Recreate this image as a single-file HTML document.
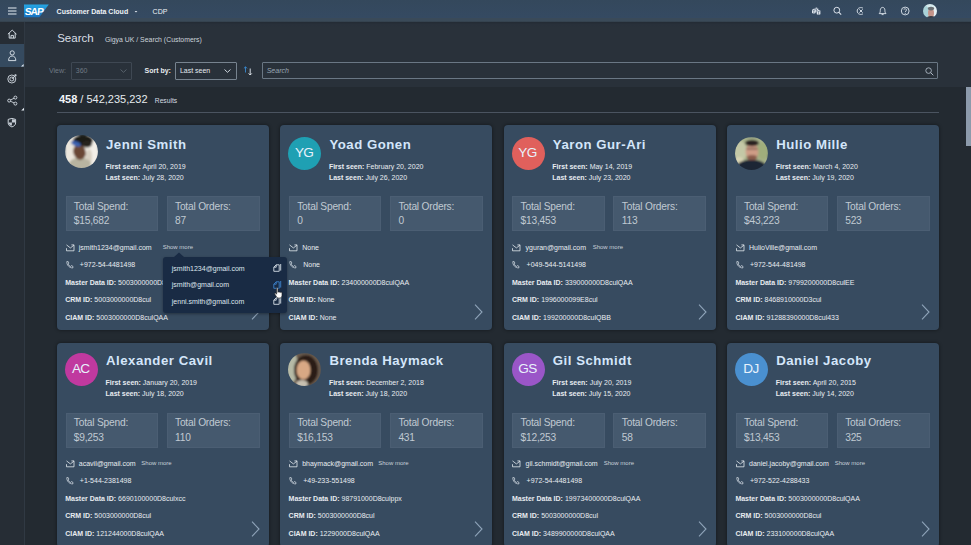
<!DOCTYPE html>
<html><head><meta charset="utf-8"><style>
*{box-sizing:border-box;margin:0;padding:0}
html,body{width:971px;height:545px;overflow:hidden;background:#232a31;font-family:"Liberation Sans",sans-serif;color:#e8ecf0}
.t{position:absolute;white-space:nowrap}
.shell{position:absolute;left:0;top:0;width:971px;height:22px;background:linear-gradient(180deg,#34485c 0,#354a62 17.5px,#3a4a59 18.5px,#3a4a58 21.3px,#2a333c 22px)}
.nav{position:absolute;left:0;top:22px;width:25px;height:523px;background:#262d35;border-right:1px solid #303943}
.navsel{position:absolute;left:0;top:44px;width:24px;height:22.7px;background:#354a5f}
.hdr{position:absolute;left:24px;top:22px;width:947px;height:65px;background:linear-gradient(180deg,#232b34 0,#28303a 2.5px,#29313a 5px)}
.card{position:absolute;width:212px;height:204.5px;background:#374b60;border-radius:4px;overflow:hidden;box-shadow:0 0 3px 1px rgba(0,0,0,0.28)}
.card .t{color:#e8ecf0}
.nm{font-weight:bold;color:#d4e6fa!important;letter-spacing:0.52px}
.sm b{font-weight:bold}
.box{position:absolute;height:35px;background:#45596e;box-shadow:inset 0 0 0 1px rgba(255,255,255,0.035)}
.st{color:#c0c9d2!important;letter-spacing:-0.2px}
.more{color:#c8d0d8!important}
.av{position:absolute;left:8px;top:11.3px;width:33px;height:33px;border-radius:50%;overflow:hidden}
.av span{position:absolute;left:-1.5px;right:0;top:-0.5px;bottom:0;text-align:center;line-height:33px;font-size:13.6px;color:#e8f2fc;letter-spacing:-0.6px}
.icw{position:absolute;line-height:0}
.chev{position:absolute;left:194px;top:179px}
.sb{position:absolute;left:966px;top:87px;width:5px;height:59px;background:#8c9aab}

.pop{position:absolute;left:163px;top:256.6px;width:124px;height:56.5px;background:#192b44;border-radius:3px;box-shadow:0 1px 3px rgba(0,0,0,0.35)}
.popt{color:#dfe6ee}
.uav{position:absolute;left:922.5px;top:3.5px;width:14px;height:14px;border-radius:50%;background:radial-gradient(ellipse 3.2px 4.6px at 7.6px 7.8px,#c49a88 0,#b08070 60%,transparent 100%),radial-gradient(circle at 7px 3px,#404850 0,#404850 25%,transparent 35%),linear-gradient(90deg,#bfe0e6,#e8f2f4 50%,#cfe4ea)}
.ph.jenni{background:radial-gradient(ellipse 7px 8px at 19px 19px,#6e4632 0,#7a4e36 55%,transparent 100%),radial-gradient(ellipse 6px 3.5px at 13px 9px,#2f5fa8 0,#2f5fa8 60%,transparent 100%),radial-gradient(ellipse 13px 9px at 18px 5px,#1e1a18 0,#2a2420 60%,transparent 100%),radial-gradient(ellipse 10px 7px at 14px 31px,#c8b8a0 0,#b0a088 70%,transparent 100%),linear-gradient(90deg,#e6ddd0,#efe8de 40%,#e9e2d6)}
.ph.hulio{background:radial-gradient(ellipse 6px 7.5px at 16.5px 15px,#c08a72 0,#b07a62 60%,transparent 100%),radial-gradient(ellipse 7px 4px at 16.5px 7px,#2a2220 0,#2a2220 60%,transparent 100%),radial-gradient(ellipse 16px 8px at 16.5px 33px,#1e2434 0,#1e2434 70%,transparent 100%),linear-gradient(90deg,#c4c8a4,#9fae84 30%,#b8c0a0 70%,#a6b28c)}
.ph.brenda{background:radial-gradient(ellipse 6.5px 8.5px at 16px 17px,#d8a888 0,#c89070 60%,transparent 100%),radial-gradient(ellipse 12px 15px at 18px 17px,#2a1c16 0,#2e1e18 70%,transparent 100%),linear-gradient(90deg,#b8bca8,#8e9480 40%,#4a3c34)}
.sh{color:#eef2f6}
.hd{color:#e6eaee}
.hd2{color:#ccd3da}
.dis{color:#6f7984}
.inp{position:absolute;border:1px solid #3f4853;border-radius:1px}
.ph{color:#9aa6b2;font-style:italic}
.res{color:#e6eaee}
.res b{color:#f2f5f8}
.res2{color:#d6dce2}
</style></head>
<body>
<div class="shell"></div>
<div class="hdr"></div>
<div class="nav"></div><div class="navsel"></div>
<svg style="position:absolute;left:8px;top:7px" width="9" height="8" viewBox="0 0 9 8"><path d="M0 1h8.5M0 4h8.5M0 7h8.5" stroke="#e6edf4" stroke-width="1.1"/></svg>
<svg style="position:absolute;left:24px;top:4px" width="26" height="14" viewBox="0 0 26 14"><defs><linearGradient id="sapg" x1="0" y1="0" x2="0" y2="1"><stop offset="0" stop-color="#26a6e4"/><stop offset="1" stop-color="#1872c0"/></linearGradient></defs><path d="M0 0.5H24.8L15.4 13.3H0Z" fill="url(#sapg)"/><text x="0.6" y="10.8" font-family="Liberation Sans" font-weight="bold" font-size="10.2" fill="#fff" letter-spacing="-0.9" transform="skewX(-6) translate(1,0)">SAP</text></svg>
<div class="t sh" style="left:56.60px;top:8.07px;font-size:7px;line-height:7px;font-weight:bold">Customer Data Cloud</div>
<svg style="position:absolute;left:134px;top:10px" width="4" height="3" viewBox="0 0 4 3"><path d="M0.6 1h2.8L2 2.4z" fill="#dfe6ee"/></svg>
<div class="t sh" style="left:152.60px;top:8.07px;font-size:7px;line-height:7px;">CDP</div>
<div class="t hd" style="left:57.20px;top:32.87px;font-size:11.5px;line-height:11.5px;color:#d9dfe5">Search</div>
<div class="t hd2" style="left:104.90px;top:36.96px;font-size:6.9px;line-height:6.9px;">Gigya UK / Search (Customers)</div>
<div class="t dis" style="left:49.00px;top:67.17px;font-size:7px;line-height:7px;">View:</div>
<div class="inp dis-b" style="left:70.5px;top:61.5px;width:61px;height:18px"></div>
<div class="t dis" style="left:75.80px;top:67.17px;font-size:7px;line-height:7px;">360</div>
<svg style="position:absolute;left:119.5px;top:69px" width="7" height="4" viewBox="0 0 7 4"><path d="M0.5 0.5L3.5 3.3L6.5 0.5" fill="none" stroke="#5c6670" stroke-width="0.9"/></svg>
<div class="t hd" style="left:144.50px;top:67.17px;font-size:7px;line-height:7px;font-weight:bold">Sort by:</div>
<div class="inp" style="left:175.3px;top:61.6px;width:61.5px;height:18.1px;border-color:#77838f"></div>
<div class="t hd" style="left:179.90px;top:67.17px;font-size:7px;line-height:7px;">Last seen</div>
<svg style="position:absolute;left:223.5px;top:69px" width="7" height="4" viewBox="0 0 7 4"><path d="M0.5 0.5L3.5 3.3L6.5 0.5" fill="none" stroke="#dfe6ee" stroke-width="0.9"/></svg>
<svg style="position:absolute;left:242.5px;top:66px" width="10" height="10" viewBox="0 0 10 10"><path d="M2.5 6.5V0.8M0.9 2.4L2.5 0.8L4.1 2.4" fill="none" stroke="#3a8ad0" stroke-width="0.9"/><path d="M7.2 2.5V9M5.6 7.4L7.2 9L8.8 7.4" fill="none" stroke="#e6edf4" stroke-width="0.9"/></svg>
<div class="inp" style="left:262.3px;top:61.7px;width:676px;height:17.6px;border-color:#6a7784"></div>
<div class="t ph" style="left:266.70px;top:67.17px;font-size:7px;line-height:7px;">Search</div>
<svg style="position:absolute;left:925px;top:67px" width="9" height="9" viewBox="0 0 9 9"><circle cx="3.6" cy="3.6" r="2.8" fill="none" stroke="#aeb9c4" stroke-width="0.9"/><path d="M5.6 5.6L8.3 8.3" stroke="#aeb9c4" stroke-width="1"/></svg>
<div class="t res" style="left:58.90px;top:93.69px;font-size:11px;line-height:11px;"><b>458</b> / 542,235,232</div>
<div class="t res2" style="left:154.80px;top:98.13px;font-size:6.7px;line-height:6.7px;">Results</div>
<div style="position:absolute;left:57px;top:111.6px;width:882px;height:1px;background:#4b5460"></div>
<svg style="position:absolute;left:0;top:22px" width="25" height="110" viewBox="0 22 25 110"><path d="M7.9 34.2L12.2 30.1L16.5 34.2M9.2 33V38.1H15.2V33M11 38.1V35.4H13.4V38.1" fill="none" stroke="#dfe6ee" stroke-width="0.9"/><circle cx="12.2" cy="52.9" r="2.1" fill="none" stroke="#dfe6ee" stroke-width="0.9"/><path d="M8.6 60.6C8.6 57.6 10 56 12.2 56C14.4 56 15.8 57.6 15.8 60.6Z" fill="none" stroke="#dfe6ee" stroke-width="0.9"/><path d="M21 66.5L23.6 63.9V66.5Z" fill="#e6edf4"/><circle cx="11.8" cy="79" r="4" fill="none" stroke="#dfe6ee" stroke-width="0.85"/><circle cx="11.8" cy="79" r="2" fill="none" stroke="#dfe6ee" stroke-width="0.85"/><path d="M11.8 79L16 74.8M14.6 74.8H16V76.2" fill="none" stroke="#dfe6ee" stroke-width="0.85"/><circle cx="9.2" cy="100.6" r="1.5" fill="none" stroke="#dfe6ee" stroke-width="0.85"/><circle cx="15.4" cy="97.6" r="1.5" fill="none" stroke="#dfe6ee" stroke-width="0.85"/><circle cx="15.4" cy="103.6" r="1.5" fill="none" stroke="#dfe6ee" stroke-width="0.85"/><path d="M10.5 99.9L14.1 98.3M10.5 101.3L14.1 102.9" stroke="#dfe6ee" stroke-width="0.8"/><path d="M21.2 110.6L24 107.8V110.6Z" fill="#e6edf4"/><path d="M8.2 119.4L11.9 118.4L15.6 119.4V123C15.6 125 14 126.3 11.9 126.9C9.8 126.3 8.2 125 8.2 123Z" fill="none" stroke="#dfe6ee" stroke-width="0.9"/><path d="M11.9 119.3V122.6H8.8V123.3C9 124.2 9.6 125 10.3 125.4H11.9V122.6H15V119.8Z" fill="#dfe6ee" opacity="0.85"/></svg>
<svg style="position:absolute;left:805px;top:0" width="140" height="21" viewBox="805 0 140 21"><path d="M812 9.6L813.8 8.8L815.6 9.6V13L813.8 13.8L812 13Z" fill="#dfe6ee"/><path d="M814.6 8.2L816.4 7.4L818.2 8.2V11.4L816.4 12.2L814.6 11.4Z" fill="#dfe6ee"/><path d="M816.8 10.6L818.6 9.8L820.4 10.6V14.2L818.6 15L816.8 14.2Z" fill="#dfe6ee"/><path d="M812 9.6L813.8 10.4L815.6 9.6M813.8 10.4V13.8M814.6 8.2L816.4 9L818.2 8.2M816.4 9V12.2M816.8 10.6L818.6 11.4L820.4 10.6M818.6 11.4V15" fill="none" stroke="#3a4f66" stroke-width="0.55"/><circle cx="836.8" cy="10.2" r="2.9" fill="none" stroke="#dfe6ee" stroke-width="0.95"/><path d="M838.9 12.3L841.2 14.6" stroke="#dfe6ee" stroke-width="1.1"/><path d="M863 8.2C861.2 6.9 857.2 7.6 857.2 11C857.2 14.4 861.2 15.1 863 13.8M859.4 9.4L862.6 12.6M859.4 12.6L862.6 9.4" fill="none" stroke="#dfe6ee" stroke-width="0.9"/><path d="M879.2 13.6H886C885 12.6 884.9 11.6 884.9 10.4C884.9 8.6 884 7.4 882.6 7.4C881.2 7.4 880.3 8.6 880.3 10.4C880.3 11.6 880.2 12.6 879.2 13.6ZM881.6 14.6H883.6" fill="none" stroke="#dfe6ee" stroke-width="0.9"/><circle cx="905.2" cy="11" r="3.9" fill="none" stroke="#dfe6ee" stroke-width="0.9"/><path d="M903.8 9.8C903.8 8.6 906.6 8.4 906.6 9.9C906.6 10.9 905.2 11 905.2 12.2" fill="none" stroke="#dfe6ee" stroke-width="0.85"/><circle cx="905.2" cy="13.6" r="0.5" fill="#dfe6ee"/></svg>
<div style="position:absolute;left:922.5px;top:3.6px;width:14px;height:14px;border-radius:50%;overflow:hidden"><svg width="14" height="14" viewBox="0 0 14 14"><defs><filter id="bu" x="-20%" y="-20%" width="140%" height="140%"><feGaussianBlur stdDeviation="0.6"/></filter></defs><g filter="url(#bu)"><rect width="14" height="14" fill="#d6eaee"/><ellipse cx="3" cy="8" rx="3" ry="6" fill="#a9d2d8"/><ellipse cx="12.5" cy="8" rx="2.5" ry="6" fill="#e6f0f4"/><ellipse cx="8" cy="9" rx="3" ry="4.6" fill="#c4948a"/><ellipse cx="8" cy="4.6" rx="3.2" ry="1.8" fill="#6a6e72"/><ellipse cx="8" cy="14" rx="4" ry="2" fill="#3a3c44"/></g></svg></div>
<div class="card" style="left:57px;top:125.3px"><div style="position:absolute;left:0;top:0px;width:212px;height:210px">
<div class="av" style="top:10px"><svg width="33" height="33" viewBox="0 0 33 33"><defs><filter id="bljenni" x="-20%" y="-20%" width="140%" height="140%"><feGaussianBlur stdDeviation="1.2"/></filter></defs><g filter="url(#bljenni)"><rect width="33" height="33" fill="#ebe6dc"/><ellipse cx="27" cy="18" rx="7" ry="13" fill="#f3efe8"/><ellipse cx="24" cy="22" rx="3" ry="8" fill="#d8d0c2"/><ellipse cx="15" cy="29" rx="11" ry="6.5" fill="#b8b4a0"/><ellipse cx="14.5" cy="17" rx="6.2" ry="7.8" fill="#6a4634" transform="rotate(-15 14.5 17)"/><ellipse cx="18" cy="5.5" rx="10" ry="5.8" fill="#1e1a18"/><ellipse cx="22" cy="9" rx="5" ry="3.5" fill="#26201c"/><ellipse cx="11" cy="8.8" rx="5" ry="2.4" fill="#3a62b0" transform="rotate(20 11 8.8)"/></g></svg></div>
<div class="t nm" style="left:49.00px;top:12.73px;font-size:13.2px;line-height:13.2px;">Jenni Smith</div>
<div class="t sm" style="left:48.50px;top:37.67px;font-size:7px;line-height:7px;"><b>First seen:</b> April 20, 2019</div>
<div class="t sm" style="left:48.50px;top:48.77px;font-size:7px;line-height:7px;"><b>Last seen:</b> July 28, 2020</div>
<div class="box" style="left:8.5px;top:71px;width:92.5px"></div>
<div class="box" style="left:109.5px;top:71px;width:93px"></div>
<div class="t st" style="left:16.80px;top:76.67px;font-size:10.2px;line-height:10.2px;">Total Spend:</div>
<div class="t st" style="left:16.80px;top:91.07px;font-size:10.2px;line-height:10.2px;">$15,682</div>
<div class="t st" style="left:118.00px;top:76.67px;font-size:10.2px;line-height:10.2px;">Total Orders:</div>
<div class="t st" style="left:118.00px;top:91.07px;font-size:10.2px;line-height:10.2px;">87</div>
<div class="icw" style="left:8.6px;top:118.8px"><svg class="ic" width="9" height="8" viewBox="0 0 9 8"><path d="M0.5 0.9L4.4 3.9L8 1.2M8 0.8V6.8H0.5V4.2M5.4 0.9H8" fill="none" stroke="#e2e8ee" stroke-width="0.8"/></svg></div>
<div class="t sm" style="left:21.80px;top:118.67px;font-size:7px;line-height:7px;">jsmith1234@gmail.com</div>
<div class="t more" style="left:105.70px;top:118.32px;font-size:6px;line-height:6px;">Show more</div>
<div class="icw" style="left:8.6px;top:135.6px"><svg class="ic" width="8" height="8" viewBox="0 0 8 8"><path d="M0.8 0.6H2.2L2.9 2.2L2 3C2.5 4.2 3.3 5 4.5 5.5L5.3 4.6L6.9 5.3V6.9C3.4 7.1 0.6 4.1 0.8 0.6Z" fill="none" stroke="#dfe6ee" stroke-width="0.7"/></svg></div>
<div class="t sm" style="left:22.80px;top:135.47px;font-size:7px;line-height:7px;">+972-54-4481498</div>
<div class="t sm" style="left:8.20px;top:153.57px;font-size:7px;line-height:7px;"><b>Master Data ID:</b> 5003000000D8culQAA</div>
<div class="t sm" style="left:8.20px;top:170.97px;font-size:7px;line-height:7px;"><b>CRM ID:</b> 5003000000D8cul</div>
<div class="t sm" style="left:8.20px;top:188.47px;font-size:7px;line-height:7px;"><b>CIAM ID:</b> 5003000000D8culQAA</div>
<svg class="chev" width="9" height="16" viewBox="0 0 9 16"><path d="M1 0.7L8 8L1 15.3" fill="none" stroke="#8ea3b8" stroke-width="1.1"/></svg>
</div></div>
<div class="card" style="left:280.4px;top:125.3px"><div style="position:absolute;left:0;top:0px;width:212px;height:210px">
<div class="av" style="background:#1fa0b3"><span>YG</span></div>
<div class="t nm" style="left:49.00px;top:12.73px;font-size:13.2px;line-height:13.2px;">Yoad Gonen</div>
<div class="t sm" style="left:48.50px;top:37.67px;font-size:7px;line-height:7px;"><b>First seen:</b> February 20, 2020</div>
<div class="t sm" style="left:48.50px;top:48.77px;font-size:7px;line-height:7px;"><b>Last seen:</b> July 26, 2020</div>
<div class="box" style="left:8.5px;top:71px;width:92.5px"></div>
<div class="box" style="left:109.5px;top:71px;width:93px"></div>
<div class="t st" style="left:16.80px;top:76.67px;font-size:10.2px;line-height:10.2px;">Total Spend:</div>
<div class="t st" style="left:16.80px;top:91.07px;font-size:10.2px;line-height:10.2px;">0</div>
<div class="t st" style="left:118.00px;top:76.67px;font-size:10.2px;line-height:10.2px;">Total Orders:</div>
<div class="t st" style="left:118.00px;top:91.07px;font-size:10.2px;line-height:10.2px;">0</div>
<div class="icw" style="left:8.6px;top:118.8px"><svg class="ic" width="9" height="8" viewBox="0 0 9 8"><path d="M0.5 0.9L4.4 3.9L8 1.2M8 0.8V6.8H0.5V4.2M5.4 0.9H8" fill="none" stroke="#e2e8ee" stroke-width="0.8"/></svg></div>
<div class="t sm" style="left:21.80px;top:118.67px;font-size:7px;line-height:7px;">None</div>
<div class="icw" style="left:8.6px;top:135.6px"><svg class="ic" width="8" height="8" viewBox="0 0 8 8"><path d="M0.8 0.6H2.2L2.9 2.2L2 3C2.5 4.2 3.3 5 4.5 5.5L5.3 4.6L6.9 5.3V6.9C3.4 7.1 0.6 4.1 0.8 0.6Z" fill="none" stroke="#dfe6ee" stroke-width="0.7"/></svg></div>
<div class="t sm" style="left:22.80px;top:135.47px;font-size:7px;line-height:7px;">None</div>
<div class="t sm" style="left:8.20px;top:153.57px;font-size:7px;line-height:7px;"><b>Master Data ID:</b> 234000000D8culQAA</div>
<div class="t sm" style="left:8.20px;top:170.97px;font-size:7px;line-height:7px;"><b>CRM ID:</b> None</div>
<div class="t sm" style="left:8.20px;top:188.47px;font-size:7px;line-height:7px;"><b>CIAM ID:</b> None</div>
<svg class="chev" width="9" height="16" viewBox="0 0 9 16"><path d="M1 0.7L8 8L1 15.3" fill="none" stroke="#8ea3b8" stroke-width="1.1"/></svg>
</div></div>
<div class="card" style="left:503.8px;top:125.3px"><div style="position:absolute;left:0;top:0px;width:212px;height:210px">
<div class="av" style="background:#e0605c"><span>YG</span></div>
<div class="t nm" style="left:49.00px;top:12.73px;font-size:13.2px;line-height:13.2px;">Yaron Gur-Ari</div>
<div class="t sm" style="left:48.50px;top:37.67px;font-size:7px;line-height:7px;"><b>First seen:</b> May 14, 2019</div>
<div class="t sm" style="left:48.50px;top:48.77px;font-size:7px;line-height:7px;"><b>Last seen:</b> July 23, 2020</div>
<div class="box" style="left:8.5px;top:71px;width:92.5px"></div>
<div class="box" style="left:109.5px;top:71px;width:93px"></div>
<div class="t st" style="left:16.80px;top:76.67px;font-size:10.2px;line-height:10.2px;">Total Spend:</div>
<div class="t st" style="left:16.80px;top:91.07px;font-size:10.2px;line-height:10.2px;">$13,453</div>
<div class="t st" style="left:118.00px;top:76.67px;font-size:10.2px;line-height:10.2px;">Total Orders:</div>
<div class="t st" style="left:118.00px;top:91.07px;font-size:10.2px;line-height:10.2px;">113</div>
<div class="icw" style="left:8.6px;top:118.8px"><svg class="ic" width="9" height="8" viewBox="0 0 9 8"><path d="M0.5 0.9L4.4 3.9L8 1.2M8 0.8V6.8H0.5V4.2M5.4 0.9H8" fill="none" stroke="#e2e8ee" stroke-width="0.8"/></svg></div>
<div class="t sm" style="left:21.80px;top:118.67px;font-size:7px;line-height:7px;">yguran@gmail.com</div>
<div class="t more" style="left:88.90px;top:118.32px;font-size:6px;line-height:6px;">Show more</div>
<div class="icw" style="left:8.6px;top:135.6px"><svg class="ic" width="8" height="8" viewBox="0 0 8 8"><path d="M0.8 0.6H2.2L2.9 2.2L2 3C2.5 4.2 3.3 5 4.5 5.5L5.3 4.6L6.9 5.3V6.9C3.4 7.1 0.6 4.1 0.8 0.6Z" fill="none" stroke="#dfe6ee" stroke-width="0.7"/></svg></div>
<div class="t sm" style="left:22.80px;top:135.47px;font-size:7px;line-height:7px;">+049-544-5141498</div>
<div class="t sm" style="left:8.20px;top:153.57px;font-size:7px;line-height:7px;"><b>Master Data ID:</b> 339000000D8culQAA</div>
<div class="t sm" style="left:8.20px;top:170.97px;font-size:7px;line-height:7px;"><b>CRM ID:</b> 1996000099E8cul</div>
<div class="t sm" style="left:8.20px;top:188.47px;font-size:7px;line-height:7px;"><b>CIAM ID:</b> 199200000D8culQBB</div>
<svg class="chev" width="9" height="16" viewBox="0 0 9 16"><path d="M1 0.7L8 8L1 15.3" fill="none" stroke="#8ea3b8" stroke-width="1.1"/></svg>
</div></div>
<div class="card" style="left:727.2px;top:125.3px"><div style="position:absolute;left:0;top:0px;width:212px;height:210px">
<div class="av"><svg width="33" height="33" viewBox="0 0 33 33"><defs><filter id="blhulio" x="-20%" y="-20%" width="140%" height="140%"><feGaussianBlur stdDeviation="1.2"/></filter></defs><g filter="url(#blhulio)"><rect width="33" height="33" fill="#a9b38c"/><ellipse cx="5" cy="14" rx="7" ry="10" fill="#c4c8a6"/><ellipse cx="28" cy="14" rx="6" ry="9" fill="#a0ae7c"/><ellipse cx="4" cy="24" rx="5" ry="4" fill="#d8d4b4"/><ellipse cx="16.5" cy="32" rx="16" ry="9.5" fill="#1e2536"/><ellipse cx="17" cy="14.5" rx="6.4" ry="8.6" fill="#cf9c86"/><ellipse cx="17" cy="6" rx="7" ry="3.2" fill="#2a2420"/><rect x="11.5" y="11.2" width="11" height="1.1" fill="#5a4038"/><ellipse cx="17" cy="20.5" rx="5.2" ry="2.6" fill="#8a5c4c"/></g></svg></div>
<div class="t nm" style="left:49.00px;top:12.73px;font-size:13.2px;line-height:13.2px;">Hulio Mille</div>
<div class="t sm" style="left:48.50px;top:37.67px;font-size:7px;line-height:7px;"><b>First seen:</b> March 4, 2020</div>
<div class="t sm" style="left:48.50px;top:48.77px;font-size:7px;line-height:7px;"><b>Last seen:</b> July 19, 2020</div>
<div class="box" style="left:8.5px;top:71px;width:92.5px"></div>
<div class="box" style="left:109.5px;top:71px;width:93px"></div>
<div class="t st" style="left:16.80px;top:76.67px;font-size:10.2px;line-height:10.2px;">Total Spend:</div>
<div class="t st" style="left:16.80px;top:91.07px;font-size:10.2px;line-height:10.2px;">$43,223</div>
<div class="t st" style="left:118.00px;top:76.67px;font-size:10.2px;line-height:10.2px;">Total Orders:</div>
<div class="t st" style="left:118.00px;top:91.07px;font-size:10.2px;line-height:10.2px;">523</div>
<div class="icw" style="left:8.6px;top:118.8px"><svg class="ic" width="9" height="8" viewBox="0 0 9 8"><path d="M0.5 0.9L4.4 3.9L8 1.2M8 0.8V6.8H0.5V4.2M5.4 0.9H8" fill="none" stroke="#e2e8ee" stroke-width="0.8"/></svg></div>
<div class="t sm" style="left:21.80px;top:118.67px;font-size:7px;line-height:7px;">HulioVille@gmail.com</div>
<div class="icw" style="left:8.6px;top:135.6px"><svg class="ic" width="8" height="8" viewBox="0 0 8 8"><path d="M0.8 0.6H2.2L2.9 2.2L2 3C2.5 4.2 3.3 5 4.5 5.5L5.3 4.6L6.9 5.3V6.9C3.4 7.1 0.6 4.1 0.8 0.6Z" fill="none" stroke="#dfe6ee" stroke-width="0.7"/></svg></div>
<div class="t sm" style="left:22.80px;top:135.47px;font-size:7px;line-height:7px;">+972-544-481498</div>
<div class="t sm" style="left:8.20px;top:153.57px;font-size:7px;line-height:7px;"><b>Master Data ID:</b> 9799200000D8culEE</div>
<div class="t sm" style="left:8.20px;top:170.97px;font-size:7px;line-height:7px;"><b>CRM ID:</b> 8468910000D3cul</div>
<div class="t sm" style="left:8.20px;top:188.47px;font-size:7px;line-height:7px;"><b>CIAM ID:</b> 91288390000D8cul433</div>
<svg class="chev" width="9" height="16" viewBox="0 0 9 16"><path d="M1 0.7L8 8L1 15.3" fill="none" stroke="#8ea3b8" stroke-width="1.1"/></svg>
</div></div>
<div class="card" style="left:57px;top:342.5px"><div style="position:absolute;left:0;top:-1px;width:212px;height:210px">
<div class="av" style="background:#c0399f"><span>AC</span></div>
<div class="t nm" style="left:49.00px;top:12.73px;font-size:13.2px;line-height:13.2px;">Alexander Cavil</div>
<div class="t sm" style="left:48.50px;top:37.67px;font-size:7px;line-height:7px;"><b>First seen:</b> January 20, 2019</div>
<div class="t sm" style="left:48.50px;top:48.77px;font-size:7px;line-height:7px;"><b>Last seen:</b> July 18, 2020</div>
<div class="box" style="left:8.5px;top:71px;width:92.5px"></div>
<div class="box" style="left:109.5px;top:71px;width:93px"></div>
<div class="t st" style="left:16.80px;top:76.67px;font-size:10.2px;line-height:10.2px;">Total Spend:</div>
<div class="t st" style="left:16.80px;top:91.07px;font-size:10.2px;line-height:10.2px;">$9,253</div>
<div class="t st" style="left:118.00px;top:76.67px;font-size:10.2px;line-height:10.2px;">Total Orders:</div>
<div class="t st" style="left:118.00px;top:91.07px;font-size:10.2px;line-height:10.2px;">110</div>
<div class="icw" style="left:8.6px;top:118.8px"><svg class="ic" width="9" height="8" viewBox="0 0 9 8"><path d="M0.5 0.9L4.4 3.9L8 1.2M8 0.8V6.8H0.5V4.2M5.4 0.9H8" fill="none" stroke="#e2e8ee" stroke-width="0.8"/></svg></div>
<div class="t sm" style="left:21.80px;top:118.67px;font-size:7px;line-height:7px;">acavil@gmail.com</div>
<div class="t more" style="left:84.30px;top:118.32px;font-size:6px;line-height:6px;">Show more</div>
<div class="icw" style="left:8.6px;top:135.6px"><svg class="ic" width="8" height="8" viewBox="0 0 8 8"><path d="M0.8 0.6H2.2L2.9 2.2L2 3C2.5 4.2 3.3 5 4.5 5.5L5.3 4.6L6.9 5.3V6.9C3.4 7.1 0.6 4.1 0.8 0.6Z" fill="none" stroke="#dfe6ee" stroke-width="0.7"/></svg></div>
<div class="t sm" style="left:22.80px;top:135.47px;font-size:7px;line-height:7px;">+1-544-2381498</div>
<div class="t sm" style="left:8.20px;top:153.57px;font-size:7px;line-height:7px;"><b>Master Data ID:</b> 6690100000D8culxcc</div>
<div class="t sm" style="left:8.20px;top:170.97px;font-size:7px;line-height:7px;"><b>CRM ID:</b> 5003000000D8cul</div>
<div class="t sm" style="left:8.20px;top:188.47px;font-size:7px;line-height:7px;"><b>CIAM ID:</b> 121244000D8culQAA</div>
<svg class="chev" width="9" height="16" viewBox="0 0 9 16"><path d="M1 0.7L8 8L1 15.3" fill="none" stroke="#8ea3b8" stroke-width="1.1"/></svg>
</div></div>
<div class="card" style="left:280.4px;top:342.5px"><div style="position:absolute;left:0;top:-1px;width:212px;height:210px">
<div class="av"><svg width="33" height="33" viewBox="0 0 33 33"><defs><filter id="blbrenda" x="-20%" y="-20%" width="140%" height="140%"><feGaussianBlur stdDeviation="1.2"/></filter></defs><g filter="url(#blbrenda)"><rect width="33" height="33" fill="#6a5a4c"/><ellipse cx="3" cy="14" rx="7" ry="16" fill="#b6baa6"/><ellipse cx="18" cy="17" rx="12" ry="15" fill="#2c1d17"/><ellipse cx="15.5" cy="17" rx="7" ry="9.5" fill="#d8a884"/><ellipse cx="14" cy="31" rx="6" ry="4" fill="#c8c0b0"/></g></svg></div>
<div class="t nm" style="left:49.00px;top:12.73px;font-size:13.2px;line-height:13.2px;">Brenda Haymack</div>
<div class="t sm" style="left:48.50px;top:37.67px;font-size:7px;line-height:7px;"><b>First seen:</b> December 2, 2018</div>
<div class="t sm" style="left:48.50px;top:48.77px;font-size:7px;line-height:7px;"><b>Last seen:</b> July 18, 2020</div>
<div class="box" style="left:8.5px;top:71px;width:92.5px"></div>
<div class="box" style="left:109.5px;top:71px;width:93px"></div>
<div class="t st" style="left:16.80px;top:76.67px;font-size:10.2px;line-height:10.2px;">Total Spend:</div>
<div class="t st" style="left:16.80px;top:91.07px;font-size:10.2px;line-height:10.2px;">$16,153</div>
<div class="t st" style="left:118.00px;top:76.67px;font-size:10.2px;line-height:10.2px;">Total Orders:</div>
<div class="t st" style="left:118.00px;top:91.07px;font-size:10.2px;line-height:10.2px;">431</div>
<div class="icw" style="left:8.6px;top:118.8px"><svg class="ic" width="9" height="8" viewBox="0 0 9 8"><path d="M0.5 0.9L4.4 3.9L8 1.2M8 0.8V6.8H0.5V4.2M5.4 0.9H8" fill="none" stroke="#e2e8ee" stroke-width="0.8"/></svg></div>
<div class="t sm" style="left:21.80px;top:118.67px;font-size:7px;line-height:7px;">bhaymack@gmail.com</div>
<div class="t more" style="left:97.90px;top:118.32px;font-size:6px;line-height:6px;">Show more</div>
<div class="icw" style="left:8.6px;top:135.6px"><svg class="ic" width="8" height="8" viewBox="0 0 8 8"><path d="M0.8 0.6H2.2L2.9 2.2L2 3C2.5 4.2 3.3 5 4.5 5.5L5.3 4.6L6.9 5.3V6.9C3.4 7.1 0.6 4.1 0.8 0.6Z" fill="none" stroke="#dfe6ee" stroke-width="0.7"/></svg></div>
<div class="t sm" style="left:22.80px;top:135.47px;font-size:7px;line-height:7px;">+49-233-551498</div>
<div class="t sm" style="left:8.20px;top:153.57px;font-size:7px;line-height:7px;"><b>Master Data ID:</b> 98791000D8culppx</div>
<div class="t sm" style="left:8.20px;top:170.97px;font-size:7px;line-height:7px;"><b>CRM ID:</b> 5003000000D8cul</div>
<div class="t sm" style="left:8.20px;top:188.47px;font-size:7px;line-height:7px;"><b>CIAM ID:</b> 1229000D8culQAA</div>
<svg class="chev" width="9" height="16" viewBox="0 0 9 16"><path d="M1 0.7L8 8L1 15.3" fill="none" stroke="#8ea3b8" stroke-width="1.1"/></svg>
</div></div>
<div class="card" style="left:503.8px;top:342.5px"><div style="position:absolute;left:0;top:-1px;width:212px;height:210px">
<div class="av" style="background:#9a56c8"><span>GS</span></div>
<div class="t nm" style="left:49.00px;top:12.73px;font-size:13.2px;line-height:13.2px;">Gil Schmidt</div>
<div class="t sm" style="left:48.50px;top:37.67px;font-size:7px;line-height:7px;"><b>First seen:</b> July 20, 2019</div>
<div class="t sm" style="left:48.50px;top:48.77px;font-size:7px;line-height:7px;"><b>Last seen:</b> July 15, 2020</div>
<div class="box" style="left:8.5px;top:71px;width:92.5px"></div>
<div class="box" style="left:109.5px;top:71px;width:93px"></div>
<div class="t st" style="left:16.80px;top:76.67px;font-size:10.2px;line-height:10.2px;">Total Spend:</div>
<div class="t st" style="left:16.80px;top:91.07px;font-size:10.2px;line-height:10.2px;">$12,253</div>
<div class="t st" style="left:118.00px;top:76.67px;font-size:10.2px;line-height:10.2px;">Total Orders:</div>
<div class="t st" style="left:118.00px;top:91.07px;font-size:10.2px;line-height:10.2px;">58</div>
<div class="icw" style="left:8.6px;top:118.8px"><svg class="ic" width="9" height="8" viewBox="0 0 9 8"><path d="M0.5 0.9L4.4 3.9L8 1.2M8 0.8V6.8H0.5V4.2M5.4 0.9H8" fill="none" stroke="#e2e8ee" stroke-width="0.8"/></svg></div>
<div class="t sm" style="left:21.80px;top:118.67px;font-size:7px;line-height:7px;">gil.schmidt@gmail.com</div>
<div class="t more" style="left:99.90px;top:118.32px;font-size:6px;line-height:6px;">Show more</div>
<div class="icw" style="left:8.6px;top:135.6px"><svg class="ic" width="8" height="8" viewBox="0 0 8 8"><path d="M0.8 0.6H2.2L2.9 2.2L2 3C2.5 4.2 3.3 5 4.5 5.5L5.3 4.6L6.9 5.3V6.9C3.4 7.1 0.6 4.1 0.8 0.6Z" fill="none" stroke="#dfe6ee" stroke-width="0.7"/></svg></div>
<div class="t sm" style="left:22.80px;top:135.47px;font-size:7px;line-height:7px;">+972-54-4481498</div>
<div class="t sm" style="left:8.20px;top:153.57px;font-size:7px;line-height:7px;"><b>Master Data ID:</b> 19973400000D8culQAA</div>
<div class="t sm" style="left:8.20px;top:170.97px;font-size:7px;line-height:7px;"><b>CRM ID:</b> 5003000000D8cul</div>
<div class="t sm" style="left:8.20px;top:188.47px;font-size:7px;line-height:7px;"><b>CIAM ID:</b> 3489900000D8culQAA</div>
<svg class="chev" width="9" height="16" viewBox="0 0 9 16"><path d="M1 0.7L8 8L1 15.3" fill="none" stroke="#8ea3b8" stroke-width="1.1"/></svg>
</div></div>
<div class="card" style="left:727.2px;top:342.5px"><div style="position:absolute;left:0;top:-1px;width:212px;height:210px">
<div class="av" style="background:#4a90d0"><span>DJ</span></div>
<div class="t nm" style="left:49.00px;top:12.73px;font-size:13.2px;line-height:13.2px;">Daniel Jacoby</div>
<div class="t sm" style="left:48.50px;top:37.67px;font-size:7px;line-height:7px;"><b>First seen:</b> April 20, 2015</div>
<div class="t sm" style="left:48.50px;top:48.77px;font-size:7px;line-height:7px;"><b>Last seen:</b> July 14, 2020</div>
<div class="box" style="left:8.5px;top:71px;width:92.5px"></div>
<div class="box" style="left:109.5px;top:71px;width:93px"></div>
<div class="t st" style="left:16.80px;top:76.67px;font-size:10.2px;line-height:10.2px;">Total Spend:</div>
<div class="t st" style="left:16.80px;top:91.07px;font-size:10.2px;line-height:10.2px;">$13,453</div>
<div class="t st" style="left:118.00px;top:76.67px;font-size:10.2px;line-height:10.2px;">Total Orders:</div>
<div class="t st" style="left:118.00px;top:91.07px;font-size:10.2px;line-height:10.2px;">325</div>
<div class="icw" style="left:8.6px;top:118.8px"><svg class="ic" width="9" height="8" viewBox="0 0 9 8"><path d="M0.5 0.9L4.4 3.9L8 1.2M8 0.8V6.8H0.5V4.2M5.4 0.9H8" fill="none" stroke="#e2e8ee" stroke-width="0.8"/></svg></div>
<div class="t sm" style="left:21.80px;top:118.67px;font-size:7px;line-height:7px;">daniel.jacoby@gmail.com</div>
<div class="t more" style="left:107.50px;top:118.32px;font-size:6px;line-height:6px;">Show more</div>
<div class="icw" style="left:8.6px;top:135.6px"><svg class="ic" width="8" height="8" viewBox="0 0 8 8"><path d="M0.8 0.6H2.2L2.9 2.2L2 3C2.5 4.2 3.3 5 4.5 5.5L5.3 4.6L6.9 5.3V6.9C3.4 7.1 0.6 4.1 0.8 0.6Z" fill="none" stroke="#dfe6ee" stroke-width="0.7"/></svg></div>
<div class="t sm" style="left:22.80px;top:135.47px;font-size:7px;line-height:7px;">+972-522-4288433</div>
<div class="t sm" style="left:8.20px;top:153.57px;font-size:7px;line-height:7px;"><b>Master Data ID:</b> 5003000000D8culQAA</div>
<div class="t sm" style="left:8.20px;top:170.97px;font-size:7px;line-height:7px;"><b>CRM ID:</b> 5003000000D8cul</div>
<div class="t sm" style="left:8.20px;top:188.47px;font-size:7px;line-height:7px;"><b>CIAM ID:</b> 233100000D8culQAA</div>
<svg class="chev" width="9" height="16" viewBox="0 0 9 16"><path d="M1 0.7L8 8L1 15.3" fill="none" stroke="#8ea3b8" stroke-width="1.1"/></svg>
</div></div>
<div class="pop"></div>
<svg style="position:absolute;left:174px;top:252px" width="10" height="5" viewBox="0 0 10 5"><path d="M0 5L5 0.5L10 5Z" fill="#192b44"/></svg>
<div class="t popt" style="left:171.80px;top:264.57px;font-size:7px;line-height:7px;">jsmith1234@gmail.com</div>
<div class="t popt" style="left:171.80px;top:280.97px;font-size:7px;line-height:7px;">jsmith@gmail.com</div>
<div class="t popt" style="left:171.80px;top:297.67px;font-size:7px;line-height:7px;">jenni.smith@gmail.com</div>
<div style="position:absolute;left:273.2px;top:262.8px;line-height:0"><svg width="9" height="10" viewBox="0 0 9 10"><path d="M0.8 4.2L3.2 1.8H6.2V8.3H0.8Z M3.2 1.8V4.2H0.8 M7.7 1V7.6" fill="none" stroke="#e0e8f0" stroke-width="0.85"/></svg></div>
<div style="position:absolute;left:273.2px;top:279.6px;line-height:0"><svg width="9" height="10" viewBox="0 0 9 10"><path d="M0.8 4.2L3.2 1.8H6.2V8.3H0.8Z M3.2 1.8V4.2H0.8 M7.7 1V7.6" fill="none" stroke="#3f86d2" stroke-width="0.85"/></svg></div>
<div style="position:absolute;left:273.2px;top:296px;line-height:0"><svg width="9" height="10" viewBox="0 0 9 10"><path d="M0.8 4.2L3.2 1.8H6.2V8.3H0.8Z M3.2 1.8V4.2H0.8 M7.7 1V7.6" fill="none" stroke="#e0e8f0" stroke-width="0.85"/></svg></div>
<svg style="position:absolute;left:273.5px;top:286.5px" width="11" height="12" viewBox="0 0 11 12"><path d="M2.6 1.1C2.6 0.3 3.9 0.3 3.9 1.1V5.3C4.1 4.6 5.2 4.6 5.3 5.3C5.5 4.8 6.6 4.8 6.7 5.5C6.9 5 8 5.1 8 5.8V8.3C8 9.9 7.1 11 5.7 11H4.6C3.4 11 2.9 10.3 2 8.9L0.8 7C0.4 6.3 1.3 5.7 1.8 6.3L2.6 7.2Z" fill="#fff" stroke="#1a1a1a" stroke-width="0.6"/></svg>
<div class="sb"></div>
</body></html>
